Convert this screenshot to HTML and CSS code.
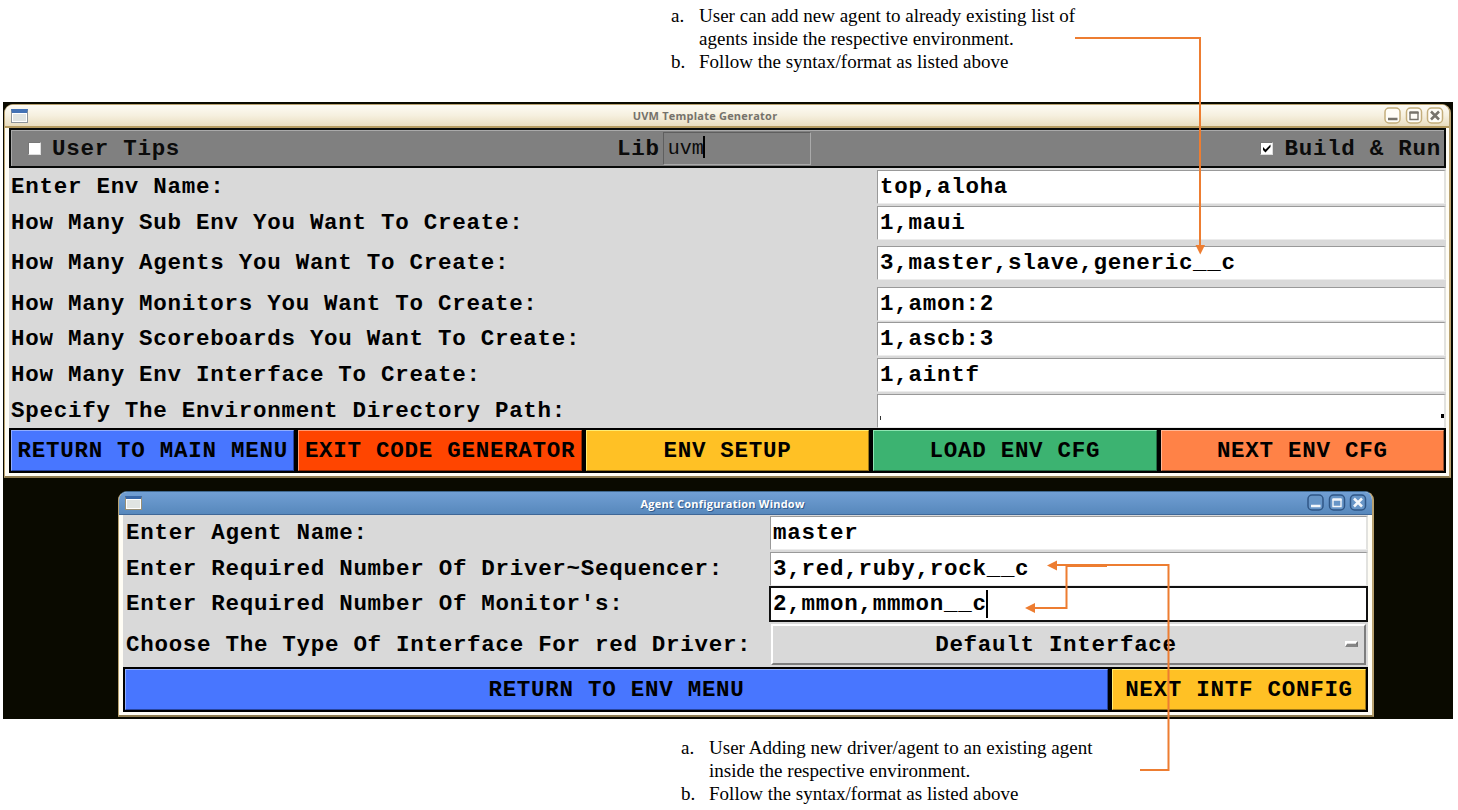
FILE: index.html
```html
<!DOCTYPE html>
<html lang="en">
<head>
<meta charset="utf-8">
<title>UVM Template Generator</title>
<link rel="stylesheet" href="styles.css">
</head>
<body>
<main class="page">
  <ol class="note note-top">
    <li><span class="mark">a.</span><span>User can add new agent to already existing list of<br>agents inside the respective environment.</span></li>
    <li><span class="mark">b.</span><span>Follow the syntax/format as listed above</span></li>
  </ol>

  <section class="desktop">
    <div class="window window-main">
      <header class="titlebar">
        <i class="app-icon"></i>
        <span class="title title-main">UVM Template Generator</span>
        <svg class="controls" width="60" height="18" viewBox="0 0 60 18">
          <g class="ctl-box"><rect x="1" y="1" width="15" height="15" rx="4"/><rect x="22.5" y="1" width="15" height="15" rx="4"/><rect x="43.5" y="1" width="15" height="15" rx="4"/></g>
          <g class="ctl-mark"><path d="M4 12h9.500"/><path d="M25.500 5.500h9"/><path class="thin" d="M26 5v7.500h8V5"/><path class="cross" d="M47 4.500l8 8m0-8l-8 8"/></g>
        </svg>
      </header>
      <div class="toolbar">
        <label class="check"><i class="box"></i>User Tips</label>
        <label class="lib">Lib<span class="lib-field">uvm<i class="caret"></i></span></label>
        <label class="check check-right"><i class="box"><svg width="11" height="11" viewBox="0 0 11 11"><path d="M2 4v3l2.500 2.500L9.500 4V1.500L4.500 6.500z"/></svg></i>Build &amp; Run</label>
      </div>
      <div class="form form-main">
        <label>Enter Env Name:</label><div class="entry">top,aloha</div>
        <label>How Many Sub Env You Want To Create:</label><div class="entry">1,maui</div>
        <label>How Many Agents You Want To Create:</label><div class="entry entry-tall">3,master,slave,generic__c</div>
        <label>How Many Monitors You Want To Create:</label><div class="entry">1,amon:2</div>
        <label>How Many Scoreboards You Want To Create:</label><div class="entry">1,ascb:3</div>
        <label>How Many Env Interface To Create:</label><div class="entry">1,aintf</div>
        <label>Specify The Environment Directory Path:</label><div class="entry entry-path"><i class="speck"></i><i class="speck speck-end"></i></div>
      </div>
      <div class="buttons buttons-main">
        <div class="btn blue">RETURN TO MAIN MENU</div>
        <div class="btn red">EXIT CODE GENERATOR</div>
        <div class="btn gold">ENV SETUP</div>
        <div class="btn green">LOAD ENV CFG</div>
        <div class="btn coral">NEXT ENV CFG</div>
      </div>
    </div>

    <div class="window window-agent">
      <header class="titlebar">
        <i class="app-icon"></i>
        <span class="title title-agent">Agent Configuration Window</span>
        <svg class="controls" width="60" height="18" viewBox="0 0 60 18">
          <g class="ctl-box"><rect x="1" y="1" width="15" height="15" rx="4"/><rect x="22.500" y="1" width="15" height="15" rx="4"/><rect x="43.500" y="1" width="15" height="15" rx="4"/></g>
          <g class="ctl-mark"><path d="M4 12h9.500"/><path d="M25.500 5.500h9"/><path class="thin" d="M26 5v7.500h8V5"/><path class="cross" d="M47 4.500l8 8m0-8l-8 8"/></g>
        </svg>
      </header>
      <div class="form form-agent">
        <label>Enter Agent Name:</label><div class="entry">master</div>
        <label>Enter Required Number Of Driver~Sequencer:</label><div class="entry entry-second">3,red,ruby,rock__c</div>
        <label>Enter Required Number Of Monitor's:</label><div class="entry entry-focus">2,mmon,mmmon__c<i class="caret"></i></div>
        <label>Choose The Type Of Interface For red Driver:</label><div class="select"><span>Default Interface</span><i class="dash"></i></div>
      </div>
      <div class="buttons buttons-agent">
        <div class="btn blue">RETURN TO ENV MENU</div>
        <div class="btn gold">NEXT INTF CONFIG</div>
      </div>
    </div>
  </section>

  <ol class="note note-bottom">
    <li><span class="mark">a.</span><span>User Adding new driver/agent to an existing agent<br>inside the respective environment.</span></li>
    <li><span class="mark">b.</span><span>Follow the syntax/format as listed above</span></li>
  </ol>

  <svg class="arrows" width="1458" height="810" viewBox="0 0 1458 810">
    <path class="line" d="M1075 38H1200V247"/>
    <path class="line" d="M1140 770H1168.500V565H1055"/>
    <path class="line" d="M1107 566H1066.500V608H1034"/>
    <path class="head" d="M1195.500 245h9.500l-4.750 9.500z"/>
    <path class="head" d="M1057 560.500v10l-10-5z"/>
    <path class="head" d="M1035 603v10l-10-5z"/>
  </svg>
</main>
</body>
</html>
```
FILE: styles.css
```css
* { box-sizing: border-box; }
body { margin: 0; background: #fff; }
.page { position: relative; width: 1458px; height: 810px; overflow: hidden; }

.note {
  list-style: none; margin: 0; padding: 4px 0 0 671px; height: 102px; letter-spacing: .02px;
  font: 19px/23px "Liberation Serif", serif; color: #000; white-space: nowrap;
}
.note li { display: flex; }
.mark { width: 28px; flex: none; }
.note-bottom { padding: 17px 0 0 681px; height: 91px; }

.desktop { margin-left: 3px; width: 1450px; height: 617px; background: #0a0a00; padding: 2px 0 0 1px; }
.window {
  background: #fffdf5; border: 1px solid #b9a270; border-bottom: 2px solid #8f7d52;
  border-right: 2px solid #b9a270; border-radius: 9px 9px 0 0; overflow: hidden;
}
.window-main { width: 1447px; height: 374px; padding: 0 3px 0 4px; }
.window-agent { width: 1256px; height: 226px; margin: 13px 0 0 114px; padding: 0 4px 0 4px; border-top-color: #40688f; }

.titlebar {
  height: 23px; margin: 0 -4px; padding: 0 5px 0 6px; display: flex; align-items: center;
  justify-content: space-between; border-bottom: 2px solid #b59b61;
  background: linear-gradient(#fdfbf4, #f6f0df 50%, #e9ddbf);
}
.window-main .titlebar { margin-right: -3px; }
.window-agent .titlebar { background: linear-gradient(#719fd4, #5788bc); border-bottom: 1px solid #3f6797; padding: 0 5px 0 6px; }
.app-icon { width: 17px; height: 14px; border: 1px solid #8e9499; border-top: 4px solid #4372b5; background: #e0e4e2; box-shadow: inset 0 0 0 1px #fff; }
.window-agent .app-icon { border-color: #3968a8 #988f76 #988f76; border-top-width: 3px; }
.title { font: bold 11px/20px "Open Sans", sans-serif; letter-spacing: .22px; padding-top: 1px; white-space: nowrap; }
.title-main { color: #75726b; margin-right: 2px; width: 147px; text-align: center; }
.title-agent { color: #fff; text-shadow: 1px 1px 0 #345b8a; margin-right: 4px; width: 165px; text-align: center; }
.ctl-box rect { fill: #fffdf7; stroke: #c4ae7b; stroke-width: 1.5; }
.ctl-mark path { fill: none; stroke: #77736b; stroke-width: 2.5; }
.ctl-mark .thin { stroke-width: 1.4; }
.window-agent .ctl-box rect { fill: #6795c7; stroke: #2f5686; }
.window-agent .ctl-mark path { stroke: #f3f6fa; }

.toolbar, .form, .buttons {
  font: bold 22.500px/34px "Liberation Mono", monospace; letter-spacing: .73px; color: #000; white-space: pre;
}
.toolbar {
  height: 40px; border: 2px solid #080a09; background: #808080; display: grid;
  grid-template-columns: 606px 1fr auto; box-shadow: inset 1px 1px #aaa; color: #0b0b0b;
}
.check { display: flex; align-items: center; padding: 1px 0 0 17px; }
.check-right { padding-right: 3px; }
.box { width: 13px; height: 13px; margin-right: 11px; background: #fff; border: 1px solid #777; border-right-color: #ddd; border-bottom-color: #ddd; display: block; }
.box svg { display: block; }
.lib { display: flex; align-items: center; padding-top: 1px; }
.lib-field {
  width: 148px; height: 33px; margin-left: 3px; padding-left: 4px; border: 1px solid #5f5f5f;
  border-right: 1px solid #aaa; border-bottom: 1px solid #aaa; font-weight: normal; font-size: 20px;
  letter-spacing: 0; line-height: 29px; display: flex; align-items: center;
}
.caret { width: 2px; height: 22px; background: #000; margin-left: -1px; }
.lib-field .caret { align-self: flex-start; margin-top: 3px; }

.form { display: grid; background: #d9d9d9; }
.form label { align-self: center; padding-left: 2px; }
.form-main { grid-template-columns: 868px 1fr; grid-template-rows: 36px 35px 46px 35px 36px 36px 35px; height: 260px; padding-top: 1px; }
.entry {
  height: 34px; margin-top: 1px; padding-left: 2px; background: #fff; line-height: 32px;
  border: 1px solid #999; border-right: 2px solid #e2e2df; border-bottom: 1px solid #ececec;
}
.entry-tall { margin-top: 6px; }
.entry-path { display: flex; justify-content: space-between; align-items: flex-end; padding: 0 0 7px 2px; }
.speck { width: 1px; height: 4px; background: #333; }
.speck-end { width: 3px; margin-bottom: 2px; background: #000; }

.form-agent { grid-template-columns: 647px 1fr; grid-template-rows: 36px 35px 36px 45px; height: 152px; letter-spacing: .71px; }
.form-agent label { padding-left: 3px; }
.form-agent .entry { letter-spacing: .74px; }
.entry-focus { height: 36px; margin: 0 0 0 -1px; padding-left: 2px; border: 2px solid #111; display: flex; align-items: center; }
.entry-focus .caret { height: 28px; }
.select {
  margin: 2px 2px 2px 1px; border: 2px solid #fff; border-right-color: #7d7d7d; border-bottom-color: #7d7d7d;
  display: flex; align-items: center; justify-content: center; padding-right: 25px; position: relative;
}
.dash { position: absolute; right: 6px; top: 15px; width: 13px; height: 6px; border: 2px solid #fff; border-right-color: #777; border-bottom: 3px solid #858585; }

.buttons { display: grid; background: #000; height: 45px; padding: 2px; gap: 4px; grid-template-rows: 41px; }
.buttons-main { grid-template-columns: repeat(5, 1fr); }
.buttons-agent { grid-template-columns: 983px 1fr; }
.btn { height: 41px; text-align: center; line-height: 41px; border: 1px solid; }
.blue { background: #4876ff; border-color: #91adff #27449f #27449f #91adff; }
.red { background: #ff4500; border-color: #ff9a73 #992a00 #992a00 #ff9a73; }
.gold { background: #ffc125; border-color: #ffed73 #9b7516 #9b7516 #ffed73; }
.green { background: #3cb371; border-color: #8ee5b2 #246b44 #246b44 #8ee5b2; }
.coral { background: #ff8247; border-color: #ffb997 #99502c #99502c #ffb997; }

.arrows { position: absolute; left: 0; top: 0; }
.line { fill: none; stroke: #ed7d31; stroke-width: 2; }
.head { fill: #ed7d31; }
```
